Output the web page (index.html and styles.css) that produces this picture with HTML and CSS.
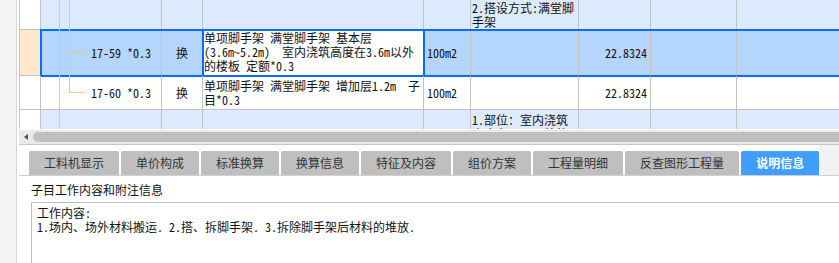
FILE: index.html
```html
<!DOCTYPE html>
<html lang="zh-CN">
<head>
<meta charset="utf-8">
<title>说明信息</title>
<link rel="stylesheet" href="styles.css">
</head>
<body>
<div class="app">
  <div class="gutter"></div>
  <div class="main">
    <div class="grid">
      <div class="row r1 alt">
        <div class="c c1"></div>
        <div class="c c2"></div>
        <div class="c c3"></div>
        <div class="c c4"></div>
        <div class="c c5"></div>
        <div class="c c6">2.搭设方式:满堂脚手架</div>
        <div class="c c7"></div>
        <div class="c c8"></div>
        <div class="c c9"></div>
      </div>
      <div class="row r2">
        <div class="c c1 hdr-sel"></div>
        <div class="sel">
          <div class="c c2 code">17-59 *0.3</div>
          <div class="c c3 ctr">换</div>
          <div class="c c4 editing">单项脚手架 满堂脚手架 基本层<br>(3.6m~5.2m)  室内浇筑高度在3.6m以外<br>的楼板 定额*0.3</div>
          <div class="c c5 unit">100m2</div>
          <div class="c c6"></div>
          <div class="c c7 num">22.8324</div>
          <div class="c c8"></div>
          <div class="c c9"></div>
        </div>
      </div>
      <div class="row r3">
        <div class="c c1"></div>
        <div class="c c2 code">17-60 *0.3</div>
        <div class="c c3 ctr">换</div>
        <div class="c c4 desc">单项脚手架 满堂脚手架 增加层1.2m  子<br>目*0.3</div>
        <div class="c c5 unit">100m2</div>
        <div class="c c6"></div>
        <div class="c c7 num">22.8324</div>
        <div class="c c8"></div>
        <div class="c c9"></div>
      </div>
      <div class="row r4 alt">
        <div class="c c1"></div>
        <div class="c c2"></div>
        <div class="c c3"></div>
        <div class="c c4"></div>
        <div class="c c5"></div>
        <div class="c c6 cut">1.部位：室内浇筑高度在3.6m以外的楼板</div>
        <div class="c c7"></div>
        <div class="c c8"></div>
        <div class="c c9"></div>
      </div>
      <svg class="tree" width="100" height="129" viewBox="0 0 100 129">
        <path d="M39.5 0V129M49.5 0V92.5M49 52.5H65M49 92.5H65" stroke="#fcc47c" stroke-width="1" fill="none"/>
      </svg>
    </div>
    <div class="hscroll"><span class="arrow"></span><span class="thumb"></span></div>
    <div class="tabs">
      <div class="tab">工料机显示</div>
      <div class="tab">单价构成</div>
      <div class="tab">标准换算</div>
      <div class="tab">换算信息</div>
      <div class="tab">特征及内容</div>
      <div class="tab">组价方案</div>
      <div class="tab">工程量明细</div>
      <div class="tab">反查图形工程量</div>
      <div class="tab active">说明信息</div>
      <div class="tab-fill"></div>
    </div>
    <div class="panel">
      <div class="panel-title">子目工作内容和附注信息</div>
      <div class="memo">工作内容:<br>1.场内、场外材料搬运. 2.搭、拆脚手架. 3.拆除脚手架后材料的堆放.</div>
    </div>
  </div>
</div>
</body>
</html>
```

FILE: styles.css
```css
html, body {
  margin: 0;
  padding: 0;
}
body {
  width: 839px;
  height: 263px;
  overflow: hidden;
  background: #fff;
  font-family: "Noto Sans Mono CJK SC", "Noto Sans CJK SC", monospace;
  font-size: 12px;
  color: #111;
}
.app {
  display: flex;
  height: 263px;
}
.gutter {
  width: 16px;
  flex: none;
  background: #f4f4f4;
  border-right: 1px solid #d6d6d6;
}
.main {
  flex: 1;
  min-width: 0;
  padding-left: 2px;
  overflow: hidden;
  display: flex;
  flex-direction: column;
}
.grid {
  position: relative;
  height: 129px;
  border-left: 1px solid #c3c3c3;
  overflow: hidden;
  flex: none;
}
.row {
  display: flex;
}
.sel {
  display: flex;
  background: #b4d5fe;
  outline: 2px solid #0a6cff;
  outline-offset: -1px;
}
.c {
  flex: none;
  box-sizing: border-box;
  border-right: 1px solid #c3c3c3;
  border-bottom: 1px solid #c3c3c3;
  display: flex;
  align-items: center;
  overflow: hidden;
  line-height: 14px;
  white-space: pre-wrap;
}
.r1 .c { height: 30px; }
.r2 .c { height: 46px; }
.r3 .c { height: 34px; }
.r4 .c { height: 20px; }
.alt .c { background: #dde9fc; }
.alt .c1 { background: #fff; }
.c1 { width: 21px; }
.c2 { width: 121px; }
.c3 { width: 41px; }
.c4 { width: 221px; padding-left: 1px; }
.c5 { width: 47px; }
.c6 { width: 108px; padding-left: 1px; }
.c7 { width: 72px; }
.c8 { width: 86px; }
.c9 { width: 150px; }
.hdr-sel { background: #ffe8cb; }
.code { padding-left: 50px; }
.ctr { justify-content: center; }
.unit { padding-left: 3px; }
.num { justify-content: flex-end; padding-right: 3px; }
.editing {
  background: #fff;
  outline: 2px solid #0a6cff;
  outline-offset: -1px;
  padding-bottom: 1px;
}
.c6.cut {
  align-items: flex-start;
  padding-top: 3px;
}
.tree {
  position: absolute;
  left: 0;
  top: 0;
}
.hscroll {
  flex: none;
  margin-top: 1px;
  height: 15px;
  box-sizing: border-box;
  background: #eaeaea;
  border-bottom: 1px solid #c6c6c6;
  display: flex;
  align-items: center;
  padding-left: 5px;
}
.arrow {
  width: 0;
  height: 0;
  border-top: 3px solid transparent;
  border-bottom: 3px solid transparent;
  border-right: 4px solid #555;
}
.thumb {
  flex: 1;
  height: 10px;
  margin-left: 5px;
  background: #c0c0c0;
  border-radius: 5px 0 0 5px;
}
.tabs {
  flex: none;
  display: flex;
  align-items: flex-end;
  height: 31px;
  box-sizing: border-box;
  border-bottom: 1px solid #d0d0d0;
  padding-left: 10px;
  gap: 2px;
  font-family: "Noto Sans CJK SC", sans-serif;
}
.tab {
  height: 24px;
  line-height: 24px;
  padding: 0 15px;
  background: #bfbfbf;
  color: #333;
  border-radius: 2px 2px 0 0;
  font-size: 12px;
}
.tab.active {
  background: #409eff;
  color: #fff;
  font-weight: bold;
}
.tab-fill {
  flex: 1;
  align-self: stretch;
  margin-left: -2px;
  background: #f2f2f2;
}
.panel {
  flex: 1;
  padding-left: 12px;
  font-family: "Noto Sans CJK SC", sans-serif;
}
.panel-title {
  margin-top: 5px;
  height: 17px;
  line-height: 17px;
  margin-bottom: 4px;
  color: #111;
}
.memo {
  width: 900px;
  height: 80px;
  border: 1px solid #bdbdbd;
  padding: 3px 5px;
  line-height: 14px;
  font-family: "Noto Sans Mono CJK SC", "Noto Sans CJK SC", monospace;
  color: #111;
}
```
